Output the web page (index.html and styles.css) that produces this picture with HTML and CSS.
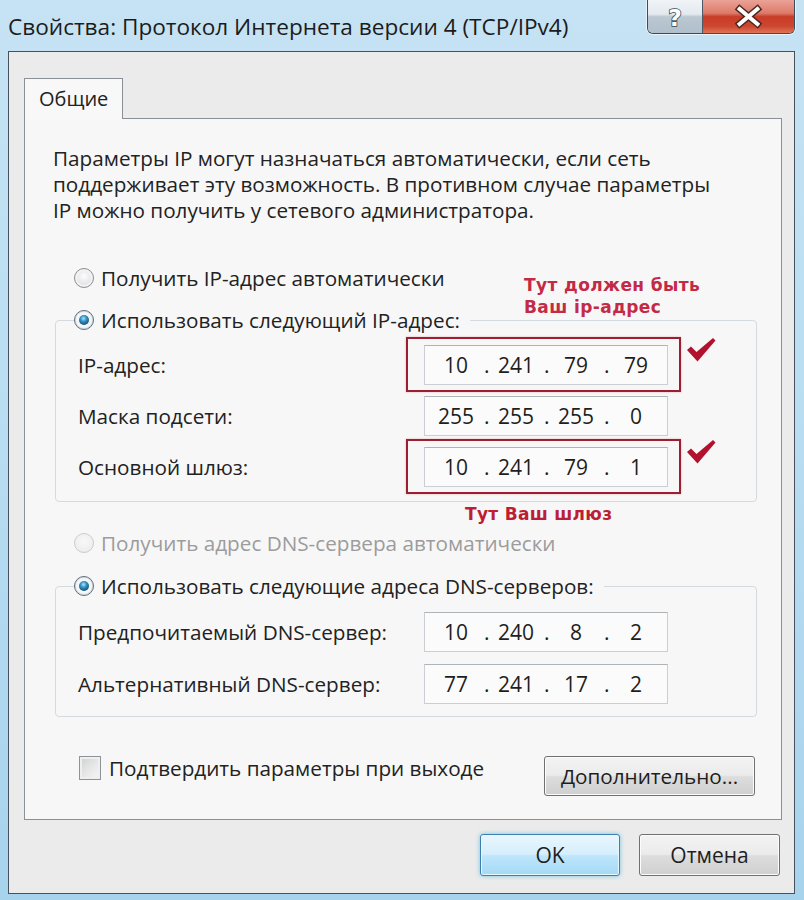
FILE: index.html
```html
<!DOCTYPE html>
<html lang="ru">
<head>
<meta charset="utf-8">
<title>Свойства: Протокол Интернета версии 4 (TCP/IPv4)</title>
<link rel="stylesheet" href="styles.css">
</head>
<body>
<div class="window">
  <header class="titlebar">
    <div class="title">Свойства: Протокол Интернета версии 4 (TCP/IPv4)</div>
    <div class="caption-btns">
      <div class="cap-btn help">
        <svg width="55" height="33" viewBox="0 0 55 33"><text x="27.5" y="26" text-anchor="middle" class="help-q">?</text></svg>
      </div>
      <div class="cap-btn close">
        <svg width="92" height="33" viewBox="0 0 92 33">
          <path d="M37 9 L55 24 M55 9 L37 24" stroke="#4a2a22" stroke-width="7" stroke-linecap="square" fill="none"/>
          <path d="M37 9 L55 24 M55 9 L37 24" stroke="#ffffff" stroke-width="4" stroke-linecap="square" fill="none"/>
        </svg>
      </div>
    </div>
  </header>

  <div class="client">
    <div class="tabstrip"><div class="tab">Общие</div></div>

    <div class="panel">
      <p class="intro">Параметры IP могут назначаться автоматически, если сеть<br>поддерживает эту возможность. В противном случае параметры<br>IP можно получить у сетевого администратора.</p>

      <div class="radio-row first"><span class="radio"></span><span>Получить IP-адрес автоматически</span></div>

      <fieldset class="group g1">
        <legend class="radio-row"><span class="radio checked"></span><span>Использовать следующий IP-адрес:</span></legend>
        <div class="field-row">
          <span class="label">IP-адрес:</span>
          <div class="cell marked">
            <div class="ip"><span class="oct">10</span><span class="dot">.</span><span class="oct">241</span><span class="dot">.</span><span class="oct">79</span><span class="dot">.</span><span class="oct">79</span></div>
          </div>
          <svg class="tick" width="30" height="26" viewBox="0 0 30 26"><path d="M1 13 L5 9.5 L10.5 15 L27 1 L29.5 3.5 L11.5 24.5 Z" fill="#b3122e"/></svg>
        </div>
        <div class="field-row">
          <span class="label">Маска подсети:</span>
          <div class="cell">
            <div class="ip"><span class="oct">255</span><span class="dot">.</span><span class="oct">255</span><span class="dot">.</span><span class="oct">255</span><span class="dot">.</span><span class="oct">0</span></div>
          </div>
        </div>
        <div class="field-row">
          <span class="label">Основной шлюз:</span>
          <div class="cell marked">
            <div class="ip"><span class="oct">10</span><span class="dot">.</span><span class="oct">241</span><span class="dot">.</span><span class="oct">79</span><span class="dot">.</span><span class="oct">1</span></div>
          </div>
          <svg class="tick" width="30" height="26" viewBox="0 0 30 26"><path d="M1 13 L5 9.5 L10.5 15 L27 1 L29.5 3.5 L11.5 24.5 Z" fill="#b3122e"/></svg>
        </div>
      </fieldset>

      <div class="radio-row dns-auto disabled"><span class="radio"></span><span>Получить адрес DNS-сервера автоматически</span></div>

      <fieldset class="group g2">
        <legend class="radio-row"><span class="radio checked"></span><span>Использовать следующие адреса DNS-серверов:</span></legend>
        <div class="field-row tall">
          <span class="label">Предпочитаемый DNS-сервер:</span>
          <div class="cell">
            <div class="ip"><span class="oct">10</span><span class="dot">.</span><span class="oct">240</span><span class="dot">.</span><span class="oct">8</span><span class="dot">.</span><span class="oct">2</span></div>
          </div>
        </div>
        <div class="field-row tall">
          <span class="label">Альтернативный DNS-сервер:</span>
          <div class="cell">
            <div class="ip"><span class="oct">77</span><span class="dot">.</span><span class="oct">241</span><span class="dot">.</span><span class="oct">17</span><span class="dot">.</span><span class="oct">2</span></div>
          </div>
        </div>
      </fieldset>

      <div class="bottom-row">
        <div class="check-row"><span class="checkbox"></span><span>Подтвердить параметры при выходе</span></div>
        <button class="btn advanced">Дополнительно...</button>
      </div>

      <div class="note note-ip">Тут должен быть<br>Ваш ip-адрес</div>
      <div class="note note-gw">Тут Ваш шлюз</div>
    </div>

    <div class="footer">
      <button class="btn ok">OK</button>
      <button class="btn cancel">Отмена</button>
    </div>
  </div>
</div>
</body>
</html>
```

FILE: styles.css
```css
* { box-sizing: border-box; }

html, body {
  margin: 0;
  padding: 0;
}

body {
  width: 804px;
  height: 900px;
  overflow: hidden;
  font-family: "Open Sans", "Noto Sans", sans-serif;
  color: #222;
}

.window {
  width: 804px;
  height: 900px;
  padding: 0 9px 6px 8px;
  display: flex;
  flex-direction: column;
  background: linear-gradient(180deg, #c6e3f4 0%, #bbdef2 40%, #a8d3ed 100%);
}

/* Title bar */
.titlebar {
  height: 51px;
  flex: none;
  display: flex;
  justify-content: space-between;
  align-items: flex-start;
}

.title {
  margin-top: 14px;
  font-size: 22.6px;
  line-height: 26px;
  color: #1c1c1c;
  white-space: nowrap;
}

.caption-btns {
  display: flex;
  margin-top: -1px;
  height: 35px;
  border: 1px solid #3d4b57;
  border-top: none;
  border-radius: 0 0 6px 6px;
  overflow: hidden;
  box-shadow: 0 0 0 1px rgba(255, 255, 255, 0.6);
}

.cap-btn {
  height: 34px;
  display: flex;
  align-items: center;
  justify-content: center;
}

.cap-btn svg { display: block; }

.help {
  width: 55px;
  border-right: 1px solid #4c5966;
  background: linear-gradient(180deg, #f2f5f8 0%, #e3e9ee 45%, #bcc8d2 52%, #b0bfcb 100%);
}

.help-q {
  font-family: "DejaVu Sans", sans-serif;
  font-size: 24px;
  font-weight: bold;
  fill: #ffffff;
  stroke: #3a4753;
  stroke-width: 1.6px;
  paint-order: stroke;
}

.close {
  width: 91px;
  background: linear-gradient(180deg, #eba59b 0%, #dd7a68 42%, #c93c28 52%, #cd4630 80%, #df7456 100%);
}

/* Client area */
.client {
  flex: 1;
  border: 1px solid #45525e;
  background: #ebebeb;
  padding: 26px 12px 0 15px;
  display: flex;
  flex-direction: column;
}

.tabstrip {
  display: flex;
  height: 40px;
  flex: none;
}

.tab {
  position: relative;
  z-index: 2;
  width: 99px;
  height: 41px;
  padding-left: 14px;
  border: 1px solid #8b8f96;
  border-bottom: none;
  background: #f8f8f8;
  font-size: 20px;
  line-height: 40px;
  color: #222;
}

.panel {
  position: relative;
  height: 702px;
  flex: none;
  border: 1px solid #8b8f96;
  background: #f7f7f7;
  padding: 26px 24px 0 30px;
  font-size: 20.7px;
}

.intro {
  margin: 0 0 0 -2px;
  font-size: 20.7px;
  line-height: 26px;
  white-space: nowrap;
}

/* Radios */
.radio-row {
  display: flex;
  align-items: center;
  gap: 7px;
  height: 30px;
  padding-left: 19px;
  white-space: nowrap;
}

.radio-row.first { margin-top: 40px; }

.radio {
  flex: none;
  width: 20px;
  height: 20px;
  border-radius: 50%;
  border: 1px solid #8a9096;
  background: radial-gradient(circle at 50% 40%, #fdfdfd 0%, #e6e6e6 55%, #cdcdcd 100%);
  box-shadow: inset 0 0 0 2px #f3f3f3;
}

.radio.checked {
  border-color: #5b6d7c;
  background: #f4f6f8;
  box-shadow: inset 0 0 0 1px #d6dde3;
}

.radio.checked::after {
  content: "";
  display: block;
  margin: 4px;
  width: 10px;
  height: 10px;
  border-radius: 50%;
  background: radial-gradient(circle at 45% 35%, #a6e2ff 0%, #3592c2 35%, #124a69 80%, #0f3f5a 100%);
}

.radio-row.disabled { color: #9c9c9c; }

.radio-row.disabled .radio {
  border-color: #c9cbcd;
  background: radial-gradient(circle at 50% 40%, #f8f8f8 0%, #eeeeee 70%, #e2e2e2 100%);
  box-shadow: none;
}

.dns-auto { margin-top: 26px; }

/* Group boxes */
.group {
  width: 702px;
  min-width: 0;
  margin: 12px 0 0 0;
  padding: 4px 10px 9px 22px;
  border: 1px solid #d3dae0;
  border-radius: 4px;
}

.group legend {
  margin-left: -4px;
  padding: 0 10px 0 0;
}

.g2 {
  margin-top: 13px;
  padding-top: 5px;
  padding-bottom: 6px;
}

.field-row {
  display: flex;
  align-items: center;
  height: 51px;
}

.field-row.tall { height: 52px; }

.label {
  width: 328px;
  flex: none;
  white-space: nowrap;
}

.cell {
  flex: none;
  width: 275px;
  height: 55px;
  display: flex;
  align-items: center;
  padding: 0 11px 0 16px;
  border: 2px solid transparent;
}

.cell.marked {
  border-color: #9c1f31;
  box-shadow: 0 0 2px rgba(200, 40, 60, 0.35);
}

.ip {
  width: 244px;
  height: 40px;
  display: flex;
  align-items: center;
  padding-left: 3px;
  border: 1px solid #cbcfd3;
  border-top-color: #aeb3b8;
  background: #fbfbfb;
  font-size: 21px;
  color: #1e1e1e;
}

.oct {
  width: 56px;
  text-align: center;
}

.dot {
  width: 4px;
  text-align: center;
}

.tick {
  flex: none;
  margin-left: 5px;
  margin-bottom: 29px;
}

/* Bottom row */
.bottom-row {
  margin-top: 39px;
  width: 702px;
  display: flex;
  justify-content: space-between;
  align-items: flex-start;
}

.check-row {
  display: flex;
  align-items: center;
  gap: 8px;
  height: 24px;
  padding-left: 24px;
  white-space: nowrap;
}

.checkbox {
  flex: none;
  width: 22px;
  height: 24px;
  border: 1px solid #8e9399;
  background: linear-gradient(135deg, #cfcfcf 0%, #e6e6e6 50%, #f7f7f7 100%);
  box-shadow: inset 0 0 0 2px #efefef;
}

.btn {
  font-family: "Open Sans", "Noto Sans", sans-serif;
  font-size: 20.7px;
  color: #1e1e1e;
  height: 40px;
  border: 1px solid #707070;
  border-radius: 3px;
  background: linear-gradient(180deg, #f3f3f3 0%, #ebebeb 48%, #dddddd 52%, #cfcfcf 100%);
  box-shadow: inset 0 0 0 1px #fcfcfc;
  padding: 0;
}

.advanced {
  width: 211px;
  margin-right: 2px;
}

/* Footer */
.footer {
  margin-top: 14px;
  display: flex;
  justify-content: flex-end;
  gap: 19px;
  padding-right: 2px;
}

.footer .btn {
  width: 141px;
  height: 42px;
  font-size: 21px;
}

.btn.ok {
  width: 140px;
  border-color: #3c7fb1;
  background: linear-gradient(180deg, #e9f6fd 0%, #d6effc 48%, #bde6fd 52%, #a6d9f4 100%);
  box-shadow: inset 0 0 0 1px #e6f7ff, 0 0 4px rgba(60, 180, 220, 0.7);
}

/* Annotations */
.note {
  position: absolute;
  font-family: "DejaVu Sans", sans-serif;
  font-size: 17px;
  font-weight: bold;
  line-height: 22px;
  white-space: nowrap;
}

.note-ip {
  left: 499px;
  top: 155px;
  letter-spacing: 0.4px;
  color: #c42a45;
}

.note-gw {
  left: 440px;
  top: 384px;
  letter-spacing: 0.3px;
  color: #bd1e33;
}
```
